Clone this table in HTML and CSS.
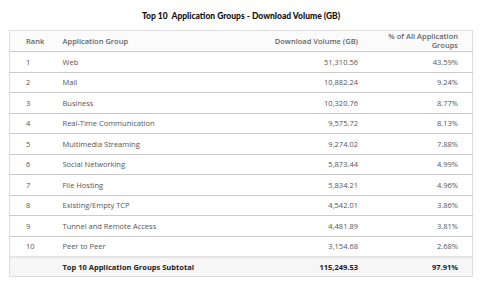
FILE: index.html
```html
<!DOCTYPE html>
<html>
<head>
<meta charset="utf-8">
<link rel="stylesheet" href="styles.css">
</head>
<body>
<div class="wrap">
  <h1 class="title">Top 10&nbsp; Application Groups - Download Volume (GB)</h1>
  <table class="grid">
    <thead>
      <tr>
        <th class="c-rank">Rank</th>
        <th class="c-name">Application Group</th>
        <th class="c-vol">Download Volume (GB)</th>
        <th class="c-pct">% of All Application<br>Groups</th>
      </tr>
    </thead>
    <tbody>
      <tr><td class="c-rank">1</td><td class="c-name">Web</td><td class="c-vol">51,310.56</td><td class="c-pct">43.59%</td></tr>
      <tr><td class="c-rank">2</td><td class="c-name">Mail</td><td class="c-vol">10,882.24</td><td class="c-pct">9.24%</td></tr>
      <tr><td class="c-rank">3</td><td class="c-name">Business</td><td class="c-vol">10,320.76</td><td class="c-pct">8.77%</td></tr>
      <tr><td class="c-rank">4</td><td class="c-name">Real-Time Communication</td><td class="c-vol">9,575.72</td><td class="c-pct">8.13%</td></tr>
      <tr><td class="c-rank">5</td><td class="c-name">Multimedia Streaming</td><td class="c-vol">9,274.02</td><td class="c-pct">7.88%</td></tr>
      <tr><td class="c-rank">6</td><td class="c-name">Social Networking</td><td class="c-vol">5,873.44</td><td class="c-pct">4.99%</td></tr>
      <tr><td class="c-rank">7</td><td class="c-name">File Hosting</td><td class="c-vol">5,834.21</td><td class="c-pct">4.96%</td></tr>
      <tr><td class="c-rank">8</td><td class="c-name">Existing/Empty TCP</td><td class="c-vol">4,542.01</td><td class="c-pct">3.86%</td></tr>
      <tr><td class="c-rank">9</td><td class="c-name">Tunnel and Remote Access</td><td class="c-vol">4,481.89</td><td class="c-pct">3.81%</td></tr>
      <tr><td class="c-rank">10</td><td class="c-name">Peer to Peer</td><td class="c-vol">3,154.68</td><td class="c-pct">2.68%</td></tr>
    </tbody>
    <tfoot>
      <tr><td class="c-rank"></td><td class="c-name">Top 10 Application Groups Subtotal</td><td class="c-vol">115,249.53</td><td class="c-pct">97.91%</td></tr>
    </tfoot>
  </table>
</div>
</body>
</html>
```

FILE: styles.css
```css
html, body {
  margin: 0;
  padding: 0;
  background: #fff;
}
body {
  font-family: "Open Sans", "Liberation Sans", sans-serif;
  color: #555;
}
.wrap {
  padding: 9px 7px 0 9px;
}
.title {
  margin: 0 0 7px 0;
  font-family: Lato, "Open Sans", sans-serif;
  font-size: 8.5px;
  font-weight: 900;
  color: #111;
  text-align: center;
  line-height: 14px;
}
.grid {
  width: 464px;
  border-collapse: collapse;
  border: 1px solid #ddd;
  font-size: 7.5px;
}
.grid th, .grid td {
  padding: 0;
  vertical-align: middle;
  border-bottom: 1px solid #ccc;
}
.grid th {
  height: 20px;
  font-weight: 600;
  color: #666;
  line-height: 9px;
  background: #fbfbfb;
}
.grid td {
  height: 19.5px;
}
.grid .c-rank { width: 53px; text-align: left; padding-left: 16px; box-sizing: border-box; }
.grid .c-name { text-align: left; }
.grid .c-vol { width: 150px; text-align: right; }
.grid .c-pct { width: 100px; text-align: right; padding-right: 14px; }
tfoot td {
  font-weight: 700;
  color: #222;
  background: #f6f6f6;
  border-top: 2px solid #e4e4e4;
}
.grid tfoot td {
  height: 18px;
  border-bottom: 1px solid #ddd;
}
```
